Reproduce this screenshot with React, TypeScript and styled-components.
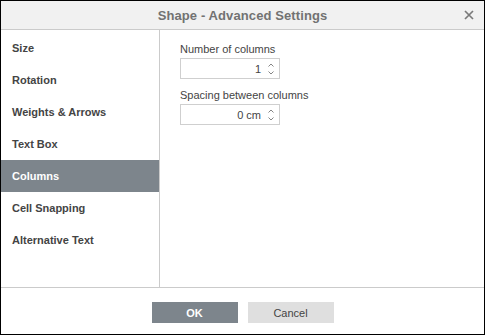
import React from "react";
import styled, { createGlobalStyle } from "styled-components";

const Global = createGlobalStyle`
  html, body { margin: 0; padding: 0; background: #fff; }
  body { font-family: "Liberation Sans", Arial, sans-serif; }
  * { box-sizing: border-box; }
`;

const Dialog = styled.div`
  width: 485px;
  height: 335px;
  border: 1px solid #000;
  display: flex;
  flex-direction: column;
  background: #fff;
  font-family: "Liberation Sans", Arial, sans-serif;
`;

const Header = styled.div`
  height: 29px;
  flex: none;
  background: #f1f1f1;
  border-bottom: 1px solid #cbcbcb;
  display: flex;
  align-items: center;
  justify-content: center;
  position: relative;
`;

const Title = styled.div`
  font-size: 13px;
  font-weight: bold;
  color: #727272;
  letter-spacing: 0.1px;
`;

const Close = styled.div`
  position: absolute;
  right: 10px;
  top: 8px;
  width: 11px;
  height: 11px;
  display: flex;
  align-items: center;
  justify-content: center;
`;

const Body = styled.div`
  flex: 1;
  display: flex;
  border-bottom: 1px solid #cbcbcb;
`;

const Sidebar = styled.div`
  width: 159px;
  flex: none;
  border-right: 1px solid #cbcbcb;
  padding-top: 2px;
  display: flex;
  flex-direction: column;
`;

const NavItem = styled.div<{ $active?: boolean }>`
  height: 32px;
  display: flex;
  align-items: center;
  padding-left: 11px;
  font-size: 11px;
  font-weight: bold;
  color: ${(p) => (p.$active ? "#fff" : "#444")};
  background: ${(p) => (p.$active ? "#7d858c" : "transparent")};
`;

const Panel = styled.div`
  flex: 1;
  padding: 13px 0 0 20px;
  display: flex;
  flex-direction: column;
`;

const Label = styled.div`
  font-size: 11px;
  color: #444;
  height: 15px;
  line-height: 13px;
`;

const Field = styled.div`
  width: 100px;
  height: 21px;
  border: 1px solid #cfcfcf;
  display: flex;
  align-items: center;
  justify-content: flex-end;
  margin-bottom: 10px;
`;

const Value = styled.div`
  font-size: 11px;
  color: #444;
  padding-right: 4px;
`;

const Spin = styled.div`
  width: 11px;
  height: 19px;
  display: flex;
  flex-direction: column;
  align-items: center;
  justify-content: center;
  gap: 4px;
  margin-right: 3px;
`;

const Footer = styled.div`
  height: 46px;
  flex: none;
  display: flex;
  align-items: flex-start;
  justify-content: center;
  gap: 10px;
  padding-top: 14px;
`;

const Button = styled.div<{ $primary?: boolean }>`
  width: 86px;
  height: 21px;
  display: flex;
  align-items: center;
  justify-content: center;
  font-size: 11px;
  font-weight: ${(p) => (p.$primary ? "bold" : "normal")};
  color: ${(p) => (p.$primary ? "#fff" : "#444")};
  background: ${(p) => (p.$primary ? "#7d858c" : "#dfdfdf")};
`;

const Chevron = ({ up }: { up?: boolean }) => (
  <svg width="6" height="4" viewBox="0 0 6 4">
    <path
      d={up ? "M0.5 3.5 L3 1 L5.5 3.5" : "M0.5 0.5 L3 3 L5.5 0.5"}
      fill="none"
      stroke="#777"
      strokeWidth="0.9"
    />
  </svg>
);

const Spinner = ({ label, value }: { label: string; value: string }) => (
  <>
    <Label>{label}</Label>
    <Field>
      <Value>{value}</Value>
      <Spin>
        <Chevron up />
        <Chevron />
      </Spin>
    </Field>
  </>
);

const items = [
  "Size",
  "Rotation",
  "Weights & Arrows",
  "Text Box",
  "Columns",
  "Cell Snapping",
  "Alternative Text",
];

export default function App() {
  return (
    <>
      <Global />
      <Dialog>
        <Header>
          <Title>Shape - Advanced Settings</Title>
          <Close>
            <svg width="10" height="10" viewBox="0 0 10 10">
              <path d="M1 1 L9 9 M9 1 L1 9" stroke="#7a7a7a" strokeWidth="1.7" />
            </svg>
          </Close>
        </Header>
        <Body>
          <Sidebar>
            {items.map((t) => (
              <NavItem key={t} $active={t === "Columns"}>
                {t}
              </NavItem>
            ))}
          </Sidebar>
          <Panel>
            <Spinner label="Number of columns" value="1" />
            <Spinner label="Spacing between columns" value="0 cm" />
          </Panel>
        </Body>
        <Footer>
          <Button $primary>OK</Button>
          <Button>Cancel</Button>
        </Footer>
      </Dialog>
    </>
  );
}
